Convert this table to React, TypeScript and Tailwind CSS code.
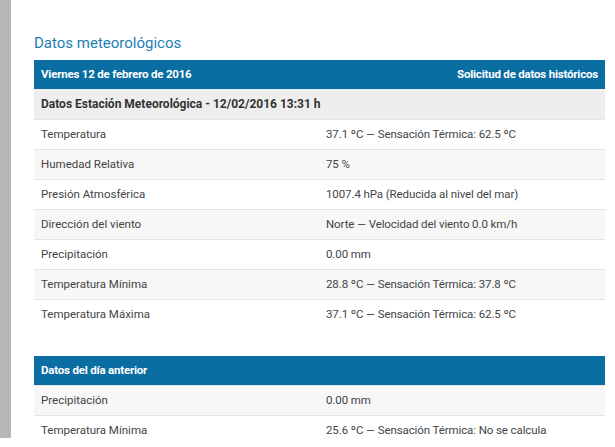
const current = [
  { label: "Temperatura", value: "37.1 ºC — Sensación Térmica: 62.5 ºC" },
  { label: "Humedad Relativa", value: "75 %" },
  { label: "Presión Atmosférica", value: "1007.4 hPa (Reducida al nivel del mar)" },
  { label: "Dirección del viento", value: "Norte — Velocidad del viento 0.0 km/h" },
  { label: "Precipitación", value: "0.00 mm" },
  { label: "Temperatura Mínima", value: "28.8 ºC — Sensación Térmica: 37.8 ºC" },
  { label: "Temperatura Máxima", value: "37.1 ºC — Sensación Térmica: 62.5 ºC" },
];

const previous = [
  { label: "Precipitación", value: "0.00 mm" },
  { label: "Temperatura Mínima", value: "25.6 ºC — Sensación Térmica: No se calcula" },
];

type Row = { label: string; value: string };

const DataRow = ({ row, index }: { row: Row; index: number }) => (
  <div
    className={`flex h-[30px] items-center border-t border-[#e4e4e4] px-[7px] text-[11.5px] text-[#444] ${
      index % 2 === 1 ? "bg-[#f7f7f7]" : "bg-white"
    }`}
  >
    <span className="w-[285px] shrink-0">{row.label}</span>
    <span className="tracking-[-0.1px]">{row.value}</span>
  </div>
);

const App = () => {
  return (
    <div className="flex h-[447px] overflow-hidden bg-white font-['Roboto',sans-serif]">
      <div className="h-[438px] w-[11px] shrink-0 bg-[#b7b7b7]" />
      <div className="w-[571px] shrink-0 box-content pl-[23px] pt-[34px]">
        <h1 className="mb-[8px] text-[15px] leading-[18px] text-[#1c80b4]">Datos meteorológicos</h1>
        <div className="flex h-[29px] items-center justify-between bg-[#0b6ea2] px-[7px] text-[11.5px] font-bold tracking-[-0.2px] text-white">
          <span>Viernes 12 de febrero de 2016</span>
          <span>Solicitud de datos históricos</span>
        </div>
        <div className="flex h-[30px] items-center bg-[#eeeeee] px-[7px] text-[12px] font-bold text-[#333]">
          Datos Estación Meteorológica - 12/02/2016 13:31 h
        </div>
        {current.map((row, i) => (
          <DataRow key={row.label} row={row} index={i} />
        ))}
        <div className="mt-[27px] flex h-[29px] items-center bg-[#0b6ea2] px-[7px] text-[11.5px] font-bold tracking-[-0.2px] text-white">
          Datos del día anterior
        </div>
        {previous.map((row, i) => (
          <DataRow key={row.label} row={row} index={i + 1} />
        ))}
      </div>
    </div>
  );
};

export default App;
